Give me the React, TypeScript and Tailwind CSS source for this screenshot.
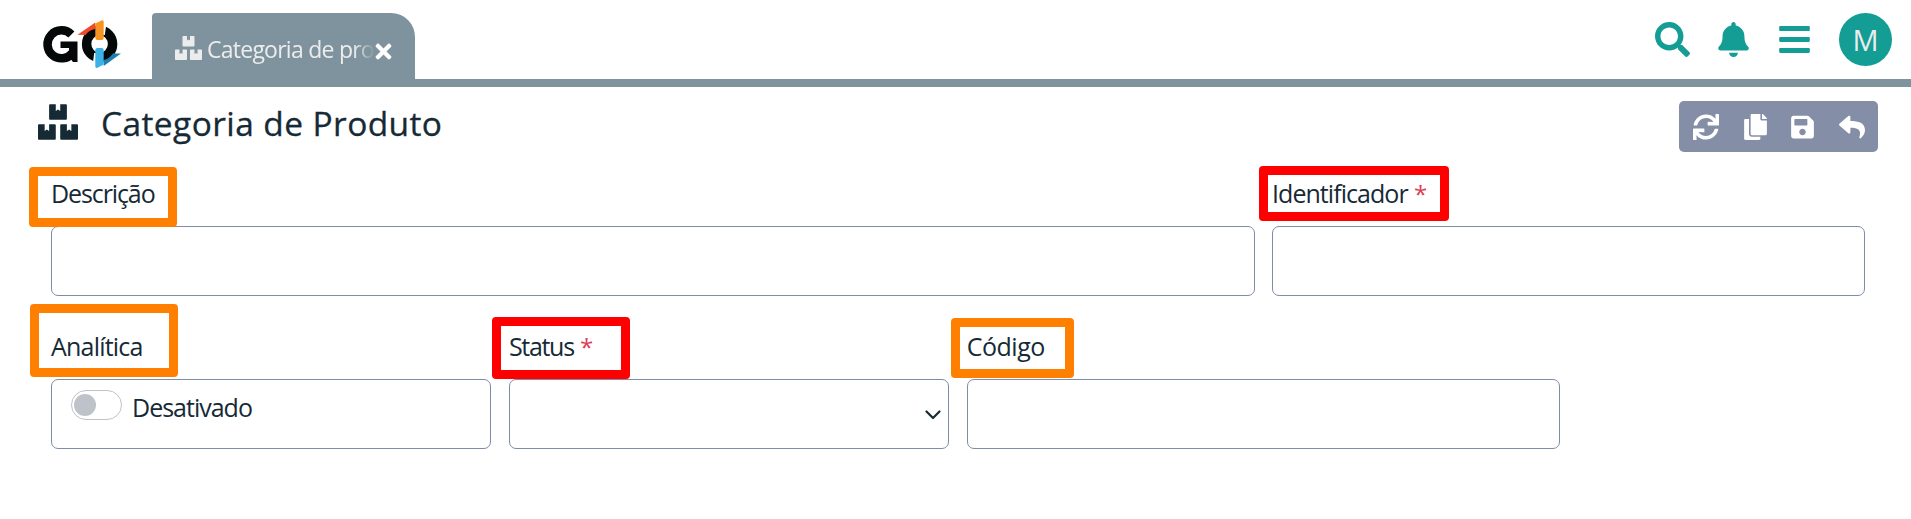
import React from "react";
import { FaBars, FaBell, FaBoxes, FaCopy, FaReply, FaSave, FaSearch, FaSync, FaTimes } from "react-icons/fa";

function Logo() {
  return (
    <svg className="block h-[50px] w-[80px]" viewBox="0 0 80 50">
      <path d="M29.400 14.400 A14 14 0 1 0 30.500 33" fill="none" stroke="#050808" strokeWidth="8.500" />
      <path d="M18.500 21.500 H35.500 V42 H31 L27 37 V28 H18.500 Z" fill="#050808" />
      <ellipse cx="57.600" cy="24" rx="13" ry="13.500" fill="none" stroke="#050808" strokeWidth="9.500" />
      <path d="M61 3 H64.500 L62.800 15 H61 Z" fill="#ffffff" />
      <path d="M54 46 H50.500 L52.200 33 H54 Z" fill="#ffffff" />
      <path d="M35.500 14.800 L53.300 2.500 V9 Q47 10 43.500 15 Z" fill="#ee4a2b" />
      <path d="M71 33.500 L79 33.500 L61.700 46 V40 Q67 39 71 33.500 Z" fill="#1d7fae" />
      <path d="M53.300 3.500 L60 .300 Q61.700 0 61.700 2 V18 Q61.700 20 59.700 20 H55.300 Q53.300 20 53.300 18 Z" fill="#f79421" />
      <path d="M53.300 30 Q53.300 28 55.300 28 H59.700 Q61.700 28 61.700 30 V44.500 L55.500 47.800 Q53.300 48.500 53.300 46.500 Z" fill="#3cb0e6" />
    </svg>
  );
}

function Header() {
  return (
    <header className="flex h-[87px] items-end border-b-8 border-[#7e939d] bg-white">
      <div className="mb-[9px] ml-[42px] w-[110px]">
        <Logo />
      </div>
      <div className="flex h-[66px] w-[263px] items-center rounded-tl-[4px] rounded-tr-[24px] bg-[#7e939d] pl-[23px] text-[#ececec]">
        <FaBoxes className="mt-[4px] h-[24px] w-[27px] shrink-0" />
        <span className="mt-[6px] ml-[5px] w-[168px] overflow-hidden text-[23px] leading-[40px] tracking-[-0.750px] whitespace-nowrap [mask-image:linear-gradient(to_right,black_147px,transparent_168px)]">
          Categoria de produto
        </span>
        <FaTimes className="-ml-[3px] mt-[10px] size-[23px] shrink-0 text-white" />
      </div>
      <div className="mr-[19px] ml-auto flex h-[79px] items-center text-[35px] text-[#139d94]">
        <FaSearch />
        <FaBell className="ml-[28px] w-[31px]" />
        <FaBars className="ml-[30px] w-[31px]" />
        <div className="ml-[29px] flex size-[53px] items-center justify-center rounded-full bg-[#139d94] text-[29px] text-[#ececec]">
          M
        </div>
      </div>
    </header>
  );
}

function Toolbar() {
  return (
    <div className="mr-[33px] ml-auto flex h-[51px] w-[199px] items-center justify-between rounded-[5px] bg-[#848ea6] pr-[13px] pl-[14px] text-[26px] text-white">
      <FaSync />
      <FaCopy className="w-[23px]" />
      <FaSave className="w-[23px]" />
      <FaReply />
    </div>
  );
}

type FieldProps = {
  label: string;
  span: string;
  mark: string;
  tracking: string;
  required?: boolean;
  children?: React.ReactNode;
};

function Field({ label, span, mark, tracking, required, children }: FieldProps) {
  return (
    <div className={`relative ${span}`}>
      <label className={`block h-[63px] pt-[12px] text-[25px] leading-[36px] whitespace-nowrap ${tracking}`}>
        {label}
        {required && <span className="text-[24px] tracking-normal text-[#dc3e56]"> *</span>}
      </label>
      <div className="flex h-[70px] rounded-[7px] border border-[#7f8ca6] bg-white">{children}</div>
      <div className={`pointer-events-none absolute rounded-[4px] border-9 ${mark}`} />
    </div>
  );
}

export default function App() {
  return (
    <div className="h-[519px] bg-white font-['Open_Sans','Noto_Sans',sans-serif] text-[#162a36]">
      <Header />
      <div className="flex h-[76px] items-center pt-[3px] pl-[38px]">
        <FaBoxes className="-mt-[9px] h-[36px] w-[40px]" />
        <h1 className="-mt-[8px] ml-[23px] text-[33.500px] leading-[44px] font-medium tracking-[0.400px] [-webkit-text-stroke:0.300px_#162a36]">
          Categoria de Produto
        </h1>
        <Toolbar />
      </div>
      <main className="grid grid-cols-12 gap-x-[17.5px] gap-y-[20px] pr-[46px] pl-[51px]">
        <Field label="Descrição" span="col-span-8" tracking="tracking-[-1.100px]" mark="-left-[22px] top-[4px] h-[60px] w-[148px] border-[#ff8000]" />
        <Field label="Identificador" span="col-span-4" tracking="tracking-[-0.950px]" required mark="-left-[13px] top-[3px] h-[55px] w-[190px] border-[#ff0000]" />
        <Field label="Analítica" span="col-span-3" tracking="tracking-[-0.800px]" mark="-left-[21px] -top-[12px] h-[73px] w-[148px] border-[#ff8000]">
          <div className="mt-[10px] ml-[19px] flex h-[30px] w-[51px] items-center rounded-full border border-[#bdc3c8] pl-[2px]">
            <div className="size-[22px] rounded-full bg-[#bdc3c8]" />
          </div>
          <span className="mt-[9px] ml-[10px] text-[25px] leading-[36px] tracking-[-1px]">Desativado</span>
        </Field>
        <Field label="Status" span="col-span-3" tracking="tracking-[-1.300px]" required mark="-left-[17px] top-px h-[62px] w-[138px] border-[#ff0000]">
          <svg className="mt-[29px] mr-[7px] ml-auto h-[12px] w-[16px]" viewBox="0 0 16 12">
            <path d="M1.500 2.500 L8 9 L14.500 2.500" fill="none" stroke="#162a36" strokeWidth="2.200" strokeLinecap="round" strokeLinejoin="round" />
          </svg>
        </Field>
        <Field label="Código" span="col-span-4" tracking="tracking-[-0.500px]" mark="-left-[16px] top-[2px] h-[60px] w-[123px] border-[#ff8000]" />
      </main>
    </div>
  );
}
